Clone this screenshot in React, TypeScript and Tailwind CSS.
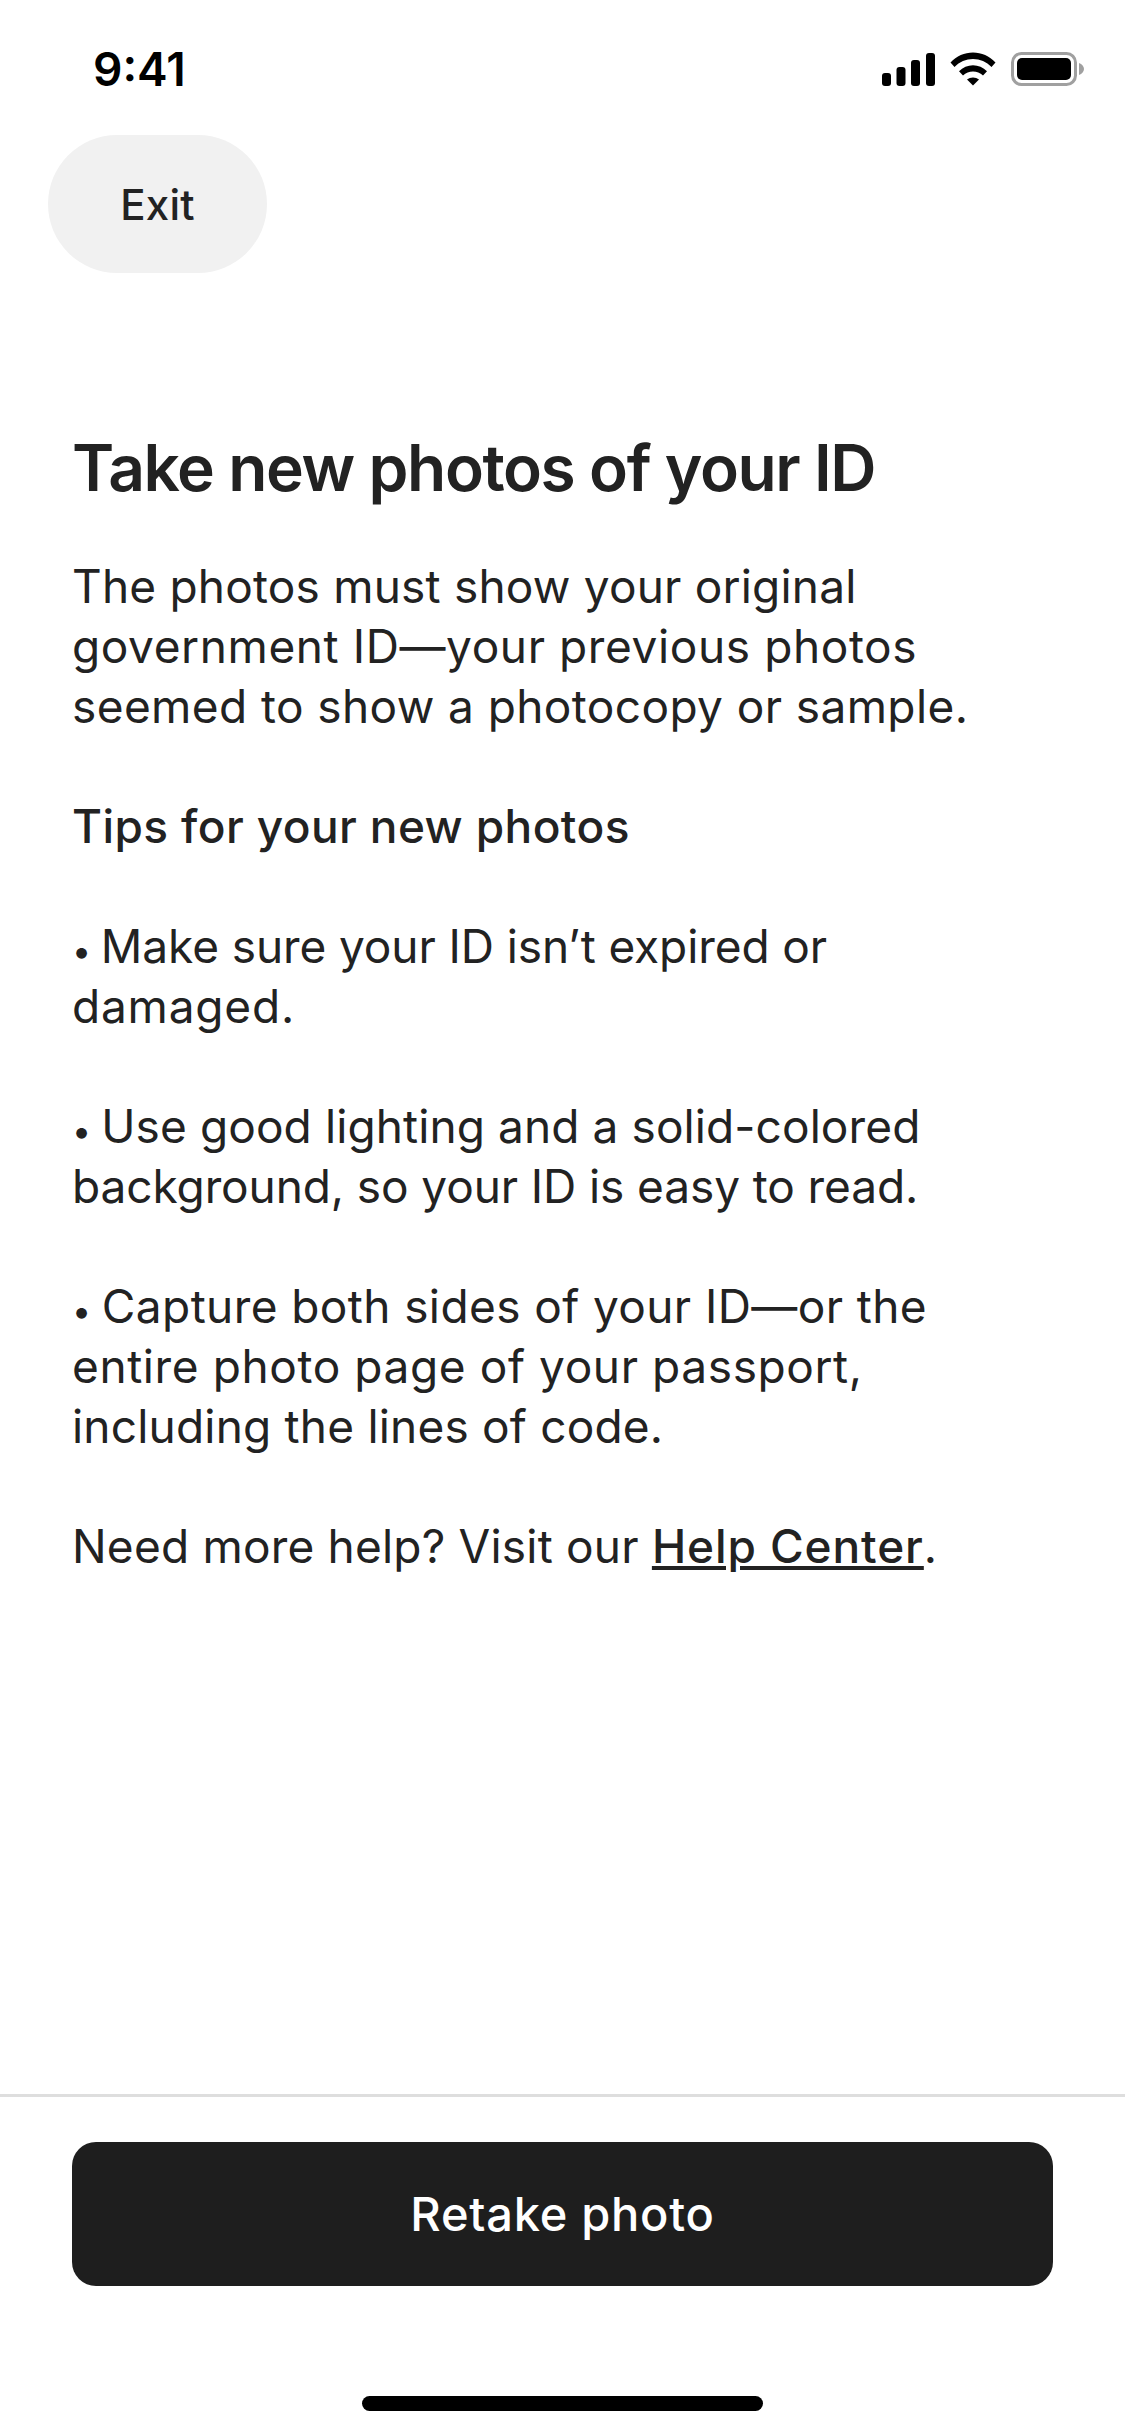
const bodyFont = "font-['Inter',sans-serif]";

function SignalIcon() {
  return (
    <svg width="53" height="33" viewBox="0 0 53 33" fill="#000">
      <rect x="0" y="20" width="9" height="13" rx="3" />
      <rect x="14.5" y="14" width="9" height="19" rx="3" />
      <rect x="29" y="7" width="9" height="26" rx="3" />
      <rect x="44" y="0" width="9" height="33" rx="3" />
    </svg>
  );
}

function WifiIcon() {
  return (
    <svg width="46" height="34" viewBox="0 0 46 34" fill="#000">
      <path d="M0.5 10.5C6.5 4 14.5 0.5 23 0.5C31.5 0.5 39.5 4 45.5 10.5L41.5 15C36.5 9.8 30 7 23 7C16 7 9.5 9.8 4.5 15Z" />
      <path d="M9 19.3C12.8 15.5 17.8 13.3 23 13.3C28.2 13.3 33.2 15.5 37 19.3L33 23.5C30.2 20.9 26.7 19.5 23 19.5C19.3 19.5 15.8 20.9 13 23.5Z" />
      <path d="M17 27.5C18.7 26.2 20.8 25.5 23 25.5C25.2 25.5 27.3 26.2 29 27.5L23 33.5Z" />
    </svg>
  );
}

function BatteryIcon() {
  return (
    <svg width="74" height="34" viewBox="0 0 74 34">
      <rect x="1.5" y="1.5" width="63" height="31" rx="9" fill="none" stroke="#a0a0a0" strokeWidth="3" />
      <rect x="6" y="6" width="54" height="22" rx="5" fill="#000" />
      <path d="M68 11C71 12 73 14.5 73 17C73 19.5 71 22 68 23Z" fill="#a0a0a0" />
    </svg>
  );
}

function StatusBar() {
  return (
    <div className="flex h-[135px] items-start justify-between pt-[50px] pr-[40px] pl-[93px]">
      <span className="font-['Inter',sans-serif] text-[46px] leading-[38px] font-semibold text-black">9:41</span>
      <div className="flex items-center gap-[15px] pt-[2px]">
        <SignalIcon />
        <WifiIcon />
        <BatteryIcon />
      </div>
    </div>
  );
}

function Bullet() {
  return <span className="mr-[-3px] text-[34px] leading-none">•</span>;
}

export default function App() {
  return (
    <div className={`flex h-[2436px] w-[1125px] flex-col bg-white text-[#222222] ${bodyFont}`}>
      <StatusBar />

      <div className="pl-[48px]">
        <button className="flex h-[138px] w-[219px] items-center justify-center rounded-[69px] bg-[#f1f1f1] text-[42px] font-medium tracking-[0.2px] text-[#222222]">
          Exit
        </button>
      </div>

      <main className="flex-1 px-[72px] pt-[150px]">
        <h1 className="text-[64px] leading-[90px] font-semibold tracking-[-1.4px]">Take new photos of your ID</h1>

        {/* Per-line tracking keeps the line ends where they are in the design */}
        <div className="mt-[43px] text-[46px] leading-[60px] tracking-[0.4px]">
          <p>
            <span className="tracking-[0.2px]">The photos must show your original</span>
            <br />
            <span className="tracking-[0.6px]">government ID—your previous photos</span>
            <br />
            seemed to show a photocopy or sample.
          </p>
          <p className="mt-[60px] font-medium">Tips for your new photos</p>
          <p className="mt-[60px]">
            <span className="tracking-[-0.1px]">
              <Bullet /> Make sure your ID isn’t expired or
            </span>
            <br />
            <span className="tracking-[0.8px]">damaged.</span>
          </p>
          <p className="mt-[60px]">
            <span className="tracking-[0.1px]">
              <Bullet /> Use good lighting and a solid-colored
            </span>
            <br />
            <span className="tracking-[-0.1px]">background, so your ID is easy to read.</span>
          </p>
          <p className="mt-[60px]">
            <Bullet /> Capture both sides of your ID—or the
            <br />
            <span className="tracking-[0.6px]">entire photo page of your passport,</span>
            <br />
            <span className="tracking-[0.2px]">including the lines of code.</span>
          </p>
          <p className="mt-[60px]">
            <span className="tracking-[0.2px]">Need more help? Visit our </span>
            <span className="font-medium tracking-[0.9px] underline">Help Center</span>.
          </p>
        </div>
      </main>

      <footer className="flex h-[342px] flex-col border-t-[3px] border-[#dedede] px-[72px] pt-[45px]">
        <button className="flex h-[144px] w-full items-center justify-center rounded-[24px] bg-[#1e1e1e] text-[47px] font-medium tracking-[0.75px] text-white">
          Retake photo
        </button>
        <div className="mx-auto mt-[110px] h-[15px] w-[401px] rounded-full bg-black" />
      </footer>
    </div>
  );
}
